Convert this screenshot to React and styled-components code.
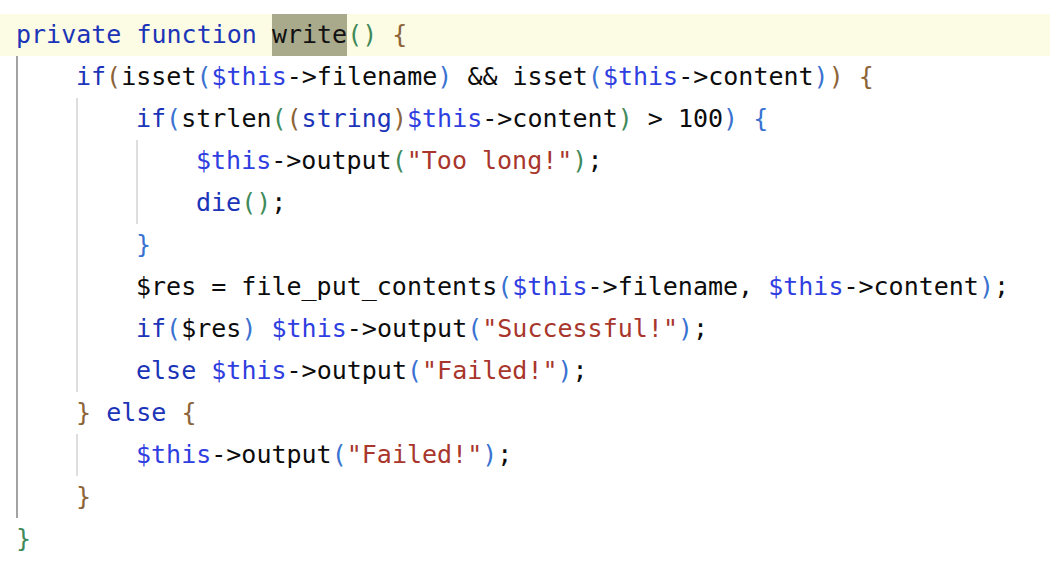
import React from "react";
import styled, { createGlobalStyle } from "styled-components";

const lines = [
  {
    depth: 0,
    current: true,
    tokens: [
      ["kw", "private"], ["t", " "], ["kw", "function"], ["t", " "],
      ["mark", "write"], ["green", "()"], ["t", " "], ["brown", "{"],
    ],
  },
  {
    depth: 1,
    tokens: [
      ["kw", "if"], ["brown", "("], ["t", "isset"], ["blue", "("], ["var", "$this"],
      ["t", "->filename"], ["blue", ")"], ["t", " && isset"], ["blue", "("],
      ["var", "$this"], ["t", "->content"], ["blue", ")"], ["brown", ")"],
      ["t", " "], ["brown", "{"],
    ],
  },
  {
    depth: 2,
    tokens: [
      ["kw", "if"], ["blue", "("], ["t", "strlen"], ["green", "("], ["brown", "("],
      ["kw", "string"], ["brown", ")"], ["var", "$this"], ["t", "->content"],
      ["green", ")"], ["t", " > 100"], ["blue", ")"], ["t", " "], ["blue", "{"],
    ],
  },
  {
    depth: 3,
    tokens: [
      ["var", "$this"], ["t", "->output"], ["green", "("], ["str", '"Too long!"'],
      ["green", ")"], ["t", ";"],
    ],
  },
  { depth: 3, tokens: [["kw", "die"], ["green", "()"], ["t", ";"]] },
  { depth: 2, tokens: [["blue", "}"]] },
  {
    depth: 2,
    tokens: [
      ["t", "$res = file_put_contents"], ["blue", "("], ["var", "$this"],
      ["t", "->filename, "], ["var", "$this"], ["t", "->content"], ["blue", ")"],
      ["t", ";"],
    ],
  },
  {
    depth: 2,
    tokens: [
      ["kw", "if"], ["blue", "("], ["t", "$res"], ["blue", ")"], ["t", " "],
      ["var", "$this"], ["t", "->output"], ["blue", "("], ["str", '"Successful!"'],
      ["blue", ")"], ["t", ";"],
    ],
  },
  {
    depth: 2,
    tokens: [
      ["kw", "else"], ["t", " "], ["var", "$this"], ["t", "->output"], ["blue", "("],
      ["str", '"Failed!"'], ["blue", ")"], ["t", ";"],
    ],
  },
  {
    depth: 1,
    tokens: [["brown", "}"], ["t", " "], ["kw", "else"], ["t", " "], ["brown", "{"]],
  },
  {
    depth: 2,
    tokens: [
      ["var", "$this"], ["t", "->output"], ["blue", "("], ["str", '"Failed!"'],
      ["blue", ")"], ["t", ";"],
    ],
  },
  { depth: 1, tokens: [["brown", "}"]] },
  { depth: 0, tokens: [["green", "}"]] },
];

const colors = {
  t: "#0c0c0c",
  kw: "#1b34b8",
  var: "#2f3ee0",
  str: "#a8362c",
  brown: "#8d6438",
  blue: "#3a72d2",
  green: "#3f8a5a",
  mark: "#0c0c0c",
};

const App = () => {
  return (
    <>
      <GlobalStyle />
      <Editor>
        {lines.map((line, idx) => (
          <Line key={idx} $current={line.current}>
            {Array.from({ length: line.depth }).map((_, level) => (
              <Indent key={level} $outer={level === 0} />
            ))}
            <Code>
              {line.tokens.map(([kind, text], i) =>
                kind === "mark" ? (
                  <Mark key={i}>{text}</Mark>
                ) : (
                  <Token key={i} $kind={kind}>
                    {text}
                  </Token>
                )
              )}
            </Code>
          </Line>
        ))}
      </Editor>
    </>
  );
};

const GlobalStyle = createGlobalStyle`
  body {
    margin: 0;
    background: #ffffff;
  }
`;

const Editor = styled.div`
  width: 1050px;
  height: 570px;
  padding-top: 14px;
  box-sizing: border-box;
  background: #ffffff;
  font-family: "DejaVu Sans Mono", "Liberation Mono", monospace;
  font-size: 25px;
  overflow: hidden;
`;

const Line = styled.div`
  display: flex;
  align-items: stretch;
  height: 42px;
  padding-left: 16px;
  background: ${(p) => (p.$current ? "#fcfbe3" : "transparent")};
`;

const Indent = styled.div`
  flex: 0 0 60px;
  box-sizing: border-box;
  border-left: ${(p) => (p.$outer ? "2px solid #a3a3a3" : "2px solid #dedede")};
`;

const Code = styled.div`
  line-height: 42px;
  white-space: pre;
  color: #0c0c0c;
`;

const Token = styled.span`
  color: ${(p) => colors[p.$kind]};
`;

const Mark = styled.span`
  display: inline-block;
  background: #a9a98b;
  color: #111111;
`;

export default App;
